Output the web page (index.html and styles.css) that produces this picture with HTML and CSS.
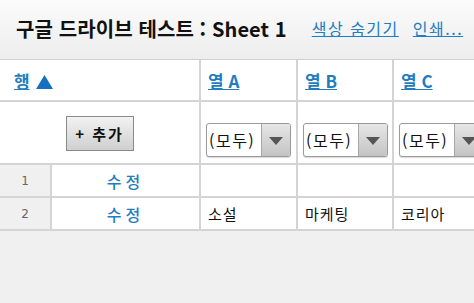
FILE: index.html
```html
<!DOCTYPE html>
<html lang="ko">
<head>
<meta charset="utf-8">
<title>구글 드라이브 테스트 : Sheet 1</title>
<link rel="stylesheet" href="styles.css">
</head>
<body>
<header class="topbar">
  <h1 class="title">구글 드라이브 테스트 : Sheet 1</h1>
  <a class="toplink" href="#">색상 숨기기</a>
  <a class="toplink" href="#">인쇄...</a>
</header>
<table class="sheet">
  <colgroup>
    <col class="c-num"><col class="c-edit"><col class="c-a"><col class="c-b"><col class="c-c">
  </colgroup>
  <tr class="r-head">
    <th colspan="2"><a href="#">행</a> <svg class="tri" width="17" height="14" viewBox="0 0 17 14"><polygon points="8.5,0 17,14 0,14" fill="#1570c0"/></svg></th>
    <th><a href="#">열 A</a></th>
    <th><a href="#">열 B</a></th>
    <th><a href="#">열 C</a></th>
  </tr>
  <tr class="r-filter">
    <td colspan="2" class="addcell"><button class="addbtn">+ 추가</button></td>
    <td class="fcell"><div class="sel"><span class="sel-text">(모두)</span><span class="sel-arrow"></span></div></td>
    <td class="fcell"><div class="sel"><span class="sel-text">(모두)</span><span class="sel-arrow"></span></div></td>
    <td class="fcell"><div class="sel"><span class="sel-text">(모두)</span><span class="sel-arrow"></span></div></td>
  </tr>
  <tr class="r-data">
    <td class="num">1</td>
    <td class="edit"><a href="#">수정</a></td>
    <td></td><td></td><td></td>
  </tr>
  <tr class="r-data">
    <td class="num">2</td>
    <td class="edit"><a href="#">수정</a></td>
    <td>소설</td><td>마케팅</td><td>코리아</td>
  </tr>
</table>
</body>
</html>
```
FILE: styles.css
```css
html, body {
  margin: 0;
  padding: 0;
  background: #f0f0f0;
  overflow: hidden;
  font-family: "Noto Sans CJK KR", "Noto Sans", sans-serif;
}
.topbar {
  height: 59px;
  border-bottom: 1px solid #cfcfcf;
  background: linear-gradient(#fbfbfb, #ededed);
  display: flex;
  align-items: center;
  padding-left: 16px;
  box-sizing: content-box;
}
.title {
  margin: 0 25px 0 0;
  font-size: 20px;
  font-weight: 700;
  color: #111;
  letter-spacing: 0.1px;
  white-space: nowrap;
  position: relative;
  top: -1px;
}
.toplink {
  color: #1f7dc0;
  font-size: 16px;
  letter-spacing: 1.5px;
  margin-right: 14px;
  white-space: nowrap;
  text-decoration: underline;
  position: relative;
  top: -2px;
}
.sheet {
  border-collapse: collapse;
  table-layout: fixed;
  width: 490px;
  background: #fff;
}
.c-num { width: 51px; }
.c-edit { width: 149px; }
.c-a { width: 97px; }
.c-b { width: 96px; }
.c-c { width: 97px; }
.sheet th, .sheet td {
  border: 2px solid #d4d4d4;
  padding: 0;
  white-space: nowrap;
  overflow: hidden;
}
.sheet tr:first-child th { border-top: 0; }
.sheet tr > :first-child { border-left: 0; }
.r-head { height: 41px; }
.r-head th {
  text-align: left;
  padding-left: 7px;
  font-size: 17px;
  font-weight: 700;
  color: #1f7dc0;
}
.r-head th:first-child { padding-left: 14px; }
.r-head a { color: #1f7dc0; text-decoration: underline; }
.tri { margin-left: 2px; vertical-align: -1px; }
.r-filter { height: 63px; }
.addcell { text-align: center; vertical-align: middle; }
.addbtn {
  width: 68px;
  height: 35px;
  border: 1px solid #8a8a8a;
  background: linear-gradient(#f2f2f2, #cfcfcf);
  font-family: "Noto Sans CJK KR", "Noto Sans", sans-serif;
  font-weight: 700;
  font-size: 15px;
  letter-spacing: 2px;
  color: #111;
  padding: 0;
  margin-top: 1px;
}
.fcell { vertical-align: bottom; padding: 0 0 6px 5px !important; }
.sel {
  display: flex;
  width: 85px;
  height: 34px;
  border: 1px solid #9a9a9a;
  border-radius: 3px;
  box-sizing: border-box;
  overflow: hidden;
  background: #fff;
  box-shadow: 0 1px 1px rgba(0,0,0,0.15);
}
.sel-text {
  flex: 1;
  font-size: 16px;
  letter-spacing: 1.5px;
  color: #111;
  line-height: 32px;
  padding-left: 2px;
}
.sel-arrow {
  width: 28px;
  flex: none;
  border-left: 1px solid #a8a8a8;
  background: linear-gradient(#e6e6e6, #c4c4c4);
  position: relative;
}
.sel-arrow::after {
  content: "";
  position: absolute;
  left: 7px;
  top: 13px;
  border-left: 7px solid transparent;
  border-right: 7px solid transparent;
  border-top: 8px solid #555;
}
.r-data { height: 33px; }
.r-data td {
  font-size: 15px;
  letter-spacing: 1px;
  color: #111;
  padding-left: 7px;
}
.r-data td.num {
  background: #f0f0f0;
  color: #666;
  text-align: center;
  padding-left: 0;
  letter-spacing: 0;
  font-family: "DejaVu Sans", sans-serif;
  font-size: 12px;
}
.r-data td.edit { text-align: center; padding-left: 0; }
.edit a {
  color: #1f7dc0;
  text-decoration: none;
  font-size: 16px;
  font-weight: 500;
  letter-spacing: 4px;
}
```
